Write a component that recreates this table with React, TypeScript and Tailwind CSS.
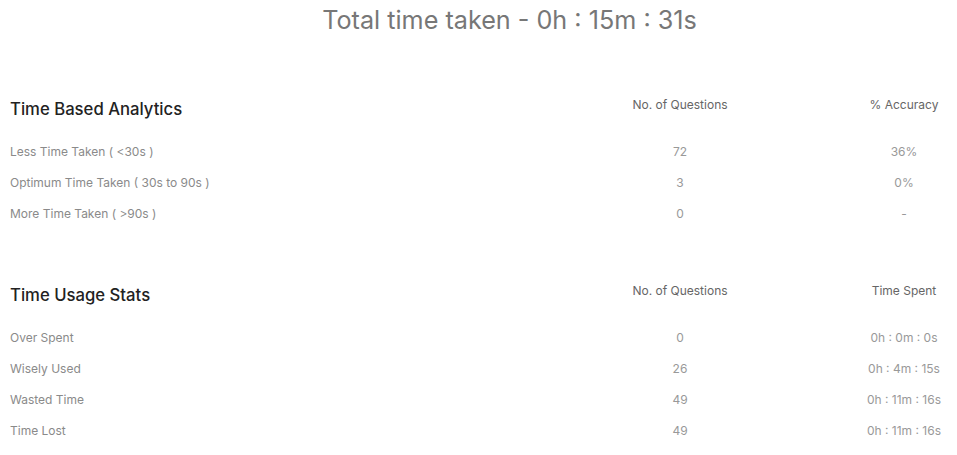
const font = { fontFamily: "Inter, 'Noto Sans', sans-serif" };

const timeRows = [
  { label: "Less Time Taken ( <30s )", count: "72", value: "36%" },
  { label: "Optimum Time Taken ( 30s to 90s )", count: "3", value: "0%" },
  { label: "More Time Taken ( >90s )", count: "0", value: "-" },
];

const usageRows = [
  { label: "Over Spent", count: "0", value: "0h : 0m : 0s" },
  { label: "Wisely Used", count: "26", value: "0h : 4m : 15s" },
  { label: "Wasted Time", count: "49", value: "0h : 11m : 16s" },
  { label: "Time Lost", count: "49", value: "0h : 11m : 16s" },
];

type Row = { label: string; count: string; value: string };

const StatsTable = ({ title, lastCol, rows }: { title: string; lastCol: string; rows: Row[] }) => (
  <div className="grid grid-cols-[489px_362px_86px] px-[10px]">
    <h2 className="h-[28px] text-[16.7px] font-medium leading-[28px] text-[#222]">{title}</h2>
    <div className="h-[28px] text-center text-[12px] leading-[20px] text-[#666]">No. of Questions</div>
    <div className="h-[28px] whitespace-nowrap text-center text-[12px] leading-[20px] text-[#666]">{lastCol}</div>
    <div className="col-span-3 h-[13px]" />
    {rows.map((r) => (
      <div key={r.label} className="contents text-[12px] leading-[31px]">
        <div className="text-[#8a8a8a]">{r.label}</div>
        <div className="text-center text-[#999]">{r.count}</div>
        <div className="whitespace-nowrap text-center text-[#999]">{r.value}</div>
      </div>
    ))}
  </div>
);

const App = () => {
  return (
    <div className="min-h-screen bg-white" style={font}>
      {/* Total time header */}
      <h1 className="pl-[62px] pt-[2px] text-center text-[25.2px] leading-[36px] text-[#777]">
        Total time taken - 0h : 15m : 31s
      </h1>

      <div className="mt-[57px]">
        <StatsTable title="Time Based Analytics" lastCol="% Accuracy" rows={timeRows} />
      </div>

      <div className="mt-[52px]">
        <StatsTable title="Time Usage Stats" lastCol="Time Spent" rows={usageRows} />
      </div>
    </div>
  );
};

export default App;
